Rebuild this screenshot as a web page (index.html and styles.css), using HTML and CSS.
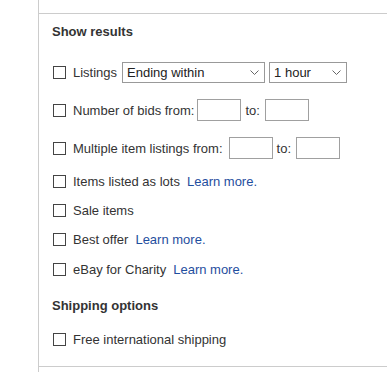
FILE: index.html
```html
<!DOCTYPE html>
<html>
<head>
    <title>Show results</title>
    <link rel="stylesheet" href="styles.css">
</head>
<body>
    <div class="panel">
        <div class="section">
            <h3 class="heading first">Show results</h3>

            <div class="row tall">
                <input type="checkbox" class="check">
                <span>Listings</span>
                <span class="select-wrap wide">
                    <select class="select">
                        <option>Ending within</option>
                        <option>Starting within</option>
                    </select>
                    <svg class="chevron" width="9" height="6" viewBox="0 0 9 6"><path d="M0.5 0.5 L4.5 4.5 L8.5 0.5" fill="none" stroke="#666" stroke-width="1"/></svg>
                </span>
                <span class="select-wrap narrow">
                    <select class="select">
                        <option>1 hour</option>
                        <option>2 hours</option>
                    </select>
                    <svg class="chevron" width="9" height="6" viewBox="0 0 9 6"><path d="M0.5 0.5 L4.5 4.5 L8.5 0.5" fill="none" stroke="#666" stroke-width="1"/></svg>
                </span>
            </div>

            <div class="row tall">
                <input type="checkbox" class="check">
                <span>Number of bids from:</span>
                <input type="text" class="box tight">
                <span class="to">to:</span>
                <input type="text" class="box">
            </div>

            <div class="row tall">
                <input type="checkbox" class="check">
                <span>Multiple item listings from:</span>
                <input type="text" class="box loose">
                <span class="to">to:</span>
                <input type="text" class="box">
            </div>

            <div class="row">
                <input type="checkbox" class="check">
                <span>Items listed as lots</span>
                <a href="#" class="more">Learn more.</a>
            </div>

            <div class="row">
                <input type="checkbox" class="check">
                <span>Sale items</span>
            </div>

            <div class="row">
                <input type="checkbox" class="check">
                <span>Best offer</span>
                <a href="#" class="more">Learn more.</a>
            </div>

            <div class="row">
                <input type="checkbox" class="check">
                <span>eBay for Charity</span>
                <a href="#" class="more">Learn more.</a>
            </div>

            <h3 class="heading second">Shipping options</h3>

            <div class="row">
                <input type="checkbox" class="check">
                <span>Free international shipping</span>
            </div>
        </div>
    </div>
</body>
</html>
```

FILE: styles.css
```css
body {
    margin: 0;
    background-color: #fff;
    font-family: Arial, "Liberation Sans", sans-serif;
    font-size: 13px;
    color: #333;
}
.panel {
    margin-left: 38px;
    border-left: 1px solid #ccc;
    height: 372px;
    padding-top: 13px;
    box-sizing: border-box;
}
.section {
    border-top: 1px solid #ccc;
    border-bottom: 1px solid #ccc;
    padding: 9px 13px 12px 13px;
}
.heading {
    margin: 0;
    font-size: 13px;
    font-weight: bold;
    line-height: 18px;
}
.heading.first {
    margin-bottom: 12px;
}
.heading.second {
    margin-top: 13px;
    margin-bottom: 10px;
}
.row {
    display: flex;
    align-items: center;
    height: 29px;
    white-space: nowrap;
}
.row.tall {
    height: 38px;
}
.row:nth-of-type(7) {
    height: 30px;
}
.check {
    -webkit-appearance: none;
    appearance: none;
    width: 13px;
    height: 13px;
    margin: 0 7px 0 1px;
    border: 1px solid #444;
    background-color: #fff;
    box-sizing: border-box;
}
.more {
    color: #1f4e9e;
    text-decoration: none;
    margin-left: 7px;
}
.select-wrap {
    position: relative;
    display: inline-block;
    margin-left: 5px;
}
.select-wrap.wide {
    width: 143px;
}
.select-wrap.narrow {
    width: 78px;
    margin-left: 4px;
}
.select {
    -webkit-appearance: none;
    appearance: none;
    width: 100%;
    height: 21px;
    border: 1px solid #999;
    border-radius: 0;
    background-color: #fff;
    font-family: Arial, "Liberation Sans", sans-serif;
    font-size: 13px;
    color: #222;
    padding: 0 0 0 4px;
    margin: 0;
    display: block;
}
.chevron {
    position: absolute;
    right: 6px;
    top: 8px;
    pointer-events: none;
}
.box {
    width: 44px;
    height: 22px;
    border: 1px solid #a0a0a0;
    box-sizing: border-box;
    margin: 0 0 0 5px;
    padding: 0;
}
.box.tight {
    margin-left: 3px;
}
.box.loose {
    margin-left: 6px;
}
.to {
    margin-left: 4px;
}
```
